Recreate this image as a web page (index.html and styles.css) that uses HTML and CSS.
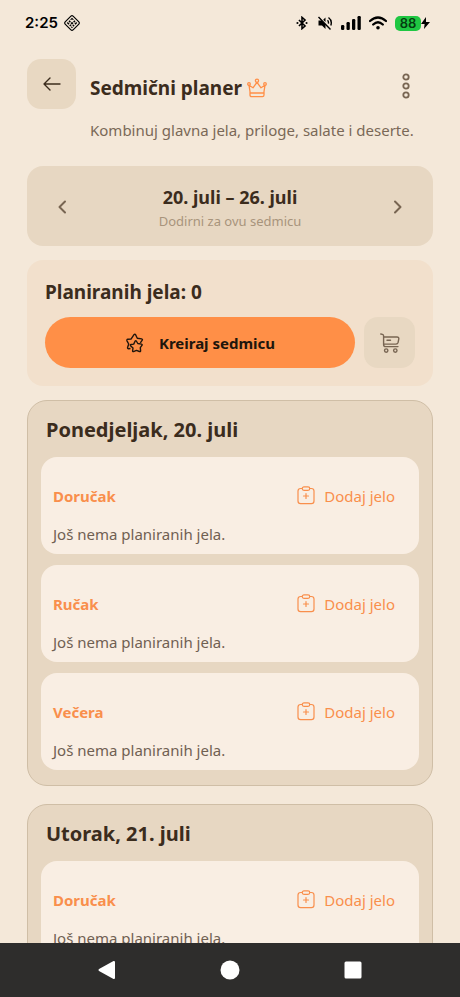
FILE: index.html
```html
<!DOCTYPE html>
<html lang="bs">
<head>
<meta charset="utf-8">
<meta name="viewport" content="width=device-width, initial-scale=1">
<title>Sedmični planer</title>
<link rel="stylesheet" href="styles.css">
</head>
<body>
<svg class="defs" aria-hidden="true">
  <symbol id="clip" viewBox="0 0 20 20">
    <g fill="none" stroke="currentColor" stroke-width="1.2" stroke-linecap="round" stroke-linejoin="round">
      <path d="M6 2.500H4.600Q2 2.500 2 5.100V15Q2 17.600 4.600 17.600H15.400Q18 17.600 18 15V5.100Q18 2.500 15.400 2.500H14"/>
      <rect x="6.200" y=".8" width="7.600" height="3.600" rx="1.800"/>
      <path d="M10 7.500v5M7.500 10h5"/>
    </g>
  </symbol>
</svg>
<div class="status">
  <span class="clock">2:25</span>
  <svg class="tag" viewBox="0 0 18 18" width="18" height="18" aria-hidden="true">
    <g transform="rotate(45 9 9)">
      <rect x="3.400" y="3.400" width="11.200" height="11.200" rx="1.500" fill="none" stroke="#000" stroke-width="1.200"/>
      <path d="M5.300 5.300h2.500v1H6.300v1.500h-1zM8.800 5.300h1.500v2H8.800zM11.200 5.300h1.500v2.500h-1.500zM5.300 8.800h2v1.500h-2zM8.200 8.200h2v2h-2zM11 9h1.700v1.500H11zM5.300 11.200h2.500v1.500H5.300zM8.800 11h1.500v1.700H8.800zM11.200 11.500h1.500v1.200h-1.500z" fill="#000"/>
    </g>
  </svg>
  <div class="signals">
    <svg viewBox="0 0 14 16" width="14" height="14" aria-hidden="true">
      <path d="M3.500 4.500l7 7L7 14.500v-13l3.500 3-7 7" fill="none" stroke="#000" stroke-width="1.800"/>
      <circle cx="1.800" cy="8" r="1.200"/><circle cx="12.200" cy="8" r="1.200"/>
    </svg>
    <svg class="mute" viewBox="0 0 16 16" width="16" height="16" aria-hidden="true">
      <path d="M1.500 5.500h3l4 4.200V14L5 10.500H1.500zM6.200 4.700L8.500 2.500V7z"/>
      <path d="M1.500 2l12 12.500M10.500 5.300q1.300 1.200.9 3.300M11.500 2.500q4 3 2.300 8" fill="none" stroke="#000" stroke-width="1.400"/>
    </svg>
    <svg class="bars" viewBox="0 0 20 14" width="20" height="14" aria-hidden="true">
      <rect x="0" y="9" width="3.300" height="5" rx="1.200"/><rect x="5.500" y="6" width="3.300" height="8" rx="1.200"/><rect x="11" y="3" width="3.300" height="11" rx="1.200"/><rect x="16.500" y="0" width="3.300" height="14" rx="1.200"/>
    </svg>
    <svg viewBox="0 0 18 14" width="18" height="14" aria-hidden="true">
      <path d="M1 5Q9-2 17 5M4.200 8.500Q9 4 13.800 8.500" fill="none" stroke="#000" stroke-width="2.300" stroke-linecap="round"/>
      <circle cx="9" cy="11.800" r="1.800"/>
    </svg>
    <div class="battery"><span class="level">88</span>
      <svg viewBox="0 0 9 12" width="9" height="12" aria-hidden="true"><path d="M5 0L0 7h3.600L3 12 9 5H5z"/></svg>
    </div>
  </div>
</div>
<main class="screen">
  <header class="header">
    <button class="tile back" aria-label="Nazad">
      <svg viewBox="0 0 18 14" width="18" height="14"><path d="M17 7H1M7 1L1 7l6 6" fill="none" stroke="currentColor" stroke-width="1.400" stroke-linecap="round" stroke-linejoin="round"/></svg>
    </button>
    <div class="heading">
      <h1>Sedmični planer
        <svg viewBox="0 0 20 20" width="20" height="20" aria-hidden="true"><g fill="none" stroke="#ff8f47" stroke-width="1.300" stroke-linejoin="round"><path d="M3 13.500L2 7.300l4 2.500L10 4.300l4 5.500 4-2.500-1 6.200V17q0 1.600-1.600 1.600H4.600Q3 18.600 3 17zM3.200 15h13.600"/><circle cx="10" cy="2.700" r="1.600"/><circle cx="2" cy="6" r="1.300"/><circle cx="18" cy="6" r="1.300"/></g></svg>
      </h1>
      <p>Kombinuj glavna jela, priloge, salate i deserte.</p>
    </div>
    <button class="more" aria-label="Više opcija">
      <svg viewBox="0 0 8 26" width="8" height="26"><g fill="none" stroke="currentColor" stroke-width="1.800"><circle cx="4" cy="4" r="2.700"/><circle cx="4" cy="13" r="2.700"/><circle cx="4" cy="22" r="2.700"/></g></svg>
    </button>
  </header>

  <section class="week">
    <button class="arrow" aria-label="Prethodna sedmica"><svg viewBox="0 0 10 14" width="10" height="14"><path d="M8 1.500L2.500 7 8 12.500" fill="none" stroke="currentColor" stroke-width="2" stroke-linecap="round" stroke-linejoin="round"/></svg></button>
    <button class="range"><strong>20. juli – 26. juli</strong><span>Dodirni za ovu sedmicu</span></button>
    <button class="arrow" aria-label="Sljedeća sedmica"><svg viewBox="0 0 10 14" width="10" height="14"><path d="M2 1.500L7.500 7 2 12.500" fill="none" stroke="currentColor" stroke-width="2" stroke-linecap="round" stroke-linejoin="round"/></svg></button>
  </section>

  <section class="plan">
    <h2>Planiranih jela: 0</h2>
    <div class="actions">
      <button class="create">
        <svg viewBox="0 0 20 20" width="20" height="20" aria-hidden="true"><g fill="none" stroke="currentColor" stroke-width="1.400" stroke-linejoin="round"><path d="M5.500 15.500L3.500 15.700q-1.200 0-.9-1.200L3.700 11 2 7.800q-.5-1.300.8-1.500l3.200-.2L9 1.700Q9.900.5 10.600 1.700l1.700 3.500 4.300.7q1.400.4.500 1.500L15.300 9.800"/><path d="M11.300 8l1.500 2.500 3.700.6q1.200.4.400 1.300l-1.600 2.200.3 3.300q-.1 1-1.200.6l-2.900-1.100-3 1.200q-1 .2-.9-.8l.4-2.800-2.500-2.300q-.6-1 .6-1.200l2.600-.4L10.200 8q.6-.8 1.100 0z"/></g></svg>
        <span>Kreiraj sedmicu</span>
      </button>
      <button class="tile cart" aria-label="Lista za kupovinu">
        <svg viewBox="0 0 20 20" width="20" height="20"><g fill="none" stroke="currentColor" stroke-width="1.400" stroke-linecap="round" stroke-linejoin="round"><path d="M.8 1l1.600.4Q3.600 1.800 3.600 3v8.400q0 2.200 2.200 2.200H18M3.600 4H17q2 0 1.800 1.800l-.7 3.600q-.4 1.700-2.100 1.700H3.800M7 7.300h3.500"/><circle cx="6.200" cy="17.600" r="1.700"/><circle cx="15.300" cy="17.600" r="1.700"/></g></svg>
      </button>
    </div>
  </section>

  <section class="day">
    <h2>Ponedjeljak, 20. juli</h2>
    <article class="meal"><div class="row"><h3>Doručak</h3><button class="add"><svg width="20" height="20" aria-hidden="true"><use href="#clip"/></svg>Dodaj jelo</button></div><p>Još nema planiranih jela.</p></article>
    <article class="meal"><div class="row"><h3>Ručak</h3><button class="add"><svg width="20" height="20" aria-hidden="true"><use href="#clip"/></svg>Dodaj jelo</button></div><p>Još nema planiranih jela.</p></article>
    <article class="meal"><div class="row"><h3>Večera</h3><button class="add"><svg width="20" height="20" aria-hidden="true"><use href="#clip"/></svg>Dodaj jelo</button></div><p>Još nema planiranih jela.</p></article>
  </section>

  <section class="day">
    <h2>Utorak, 21. juli</h2>
    <article class="meal"><div class="row"><h3>Doručak</h3><button class="add"><svg width="20" height="20" aria-hidden="true"><use href="#clip"/></svg>Dodaj jelo</button></div><p>Još nema planiranih jela.</p></article>
  </section>
</main>
<nav class="system">
  <button aria-label="Natrag"><svg viewBox="0 0 20 20" width="20" height="20"><path d="M17 2v16L2.500 10z" fill="#fff" stroke="#fff" stroke-width="2" stroke-linejoin="round"/></svg></button>
  <button aria-label="Početna"><svg viewBox="0 0 20 20" width="20" height="20"><circle cx="10" cy="10" r="9.500" fill="#fff"/></svg></button>
  <button aria-label="Nedavno"><svg viewBox="0 0 20 20" width="20" height="20"><rect x="1.500" y="1.500" width="17" height="17" rx="1.500" fill="#fff"/></svg></button>
</nav>
</body>
</html>
```
FILE: styles.css
```css
* { box-sizing: border-box; }
body {
  margin: 0;
  height: 100vh;
  display: flex;
  flex-direction: column;
  background: #f4e8d9;
  color: #3b2c1d;
  font-family: "Noto Sans", "Open Sans", sans-serif;
}
h1, h2, h3, p { margin: 0; }
button {
  border: 0;
  padding: 0;
  background: none;
  color: inherit;
  font: inherit;
}
svg { display: block; flex: none; }
.defs { position: absolute; width: 0; height: 0; }

.status {
  flex: none;
  display: flex;
  align-items: center;
  gap: 5px;
  height: 46px;
  padding: 0 30px 0 25px;
  color: #000;
}
.clock { font: 600 15px/20px Inter, sans-serif; }
.signals {
  display: flex;
  align-items: center;
  gap: 8px;
  margin-left: auto;
}
.battery { display: flex; align-items: center; }
.level {
  width: 26px;
  border-radius: 5px;
  background: #1fc742;
  color: #053c10;
  font: 600 13px/15px Inter, sans-serif;
  text-align: center;
}

.screen {
  flex: 1;
  min-height: 0;
  overflow: hidden;
  padding: 13px 27px 0;
}
.tile {
  flex: none;
  display: grid;
  place-items: center;
  border-radius: 14px;
  background: #e8d8c2;
}
.header {
  display: flex;
  align-items: flex-start;
  gap: 14px;
  height: 92px;
}
.back { width: 49px; height: 50px; }
.heading { flex: 1; width: 0; padding-top: 15px; }
h1 {
  display: flex;
  align-items: center;
  gap: 5px;
  font-size: 19px;
  line-height: 28px;
}
.heading p {
  margin-top: 16px;
  color: #7a6857;
  font-size: 15px;
  line-height: 24px;
  white-space: nowrap;
}
.more { padding: 14px 23px 0 0; color: #786552; }

.week {
  display: flex;
  align-items: center;
  justify-content: space-between;
  margin-top: 15px;
  height: 80px;
  padding: 2px 30px 0;
  border-radius: 16px;
  background: #e7d7c2;
}
.arrow { color: #786552; }
.range { display: grid; gap: 1px; }
.range strong { font-size: 18px; line-height: 26px; }
.range span { color: #a8947c; font-size: 13px; line-height: 20px; }

.plan {
  margin-top: 14px;
  padding: 18px;
  border-radius: 16px;
  background: #f2e0cc;
}
h2 { font-size: 20px; line-height: 28px; }
.plan h2 { font-size: 19px; }
.actions { display: flex; gap: 9px; margin-top: 11px; }
.create {
  flex: 1;
  display: flex;
  align-items: center;
  justify-content: center;
  gap: 14px;
  height: 51px;
  border-radius: 26px;
  background: #ff8f47;
  color: #20150c;
  font-size: 15px;
  font-weight: 700;
}
.cart { width: 51px; height: 51px; color: #786552; }

.day {
  margin-top: 14px;
  padding: 15px 13px;
  border: 1px solid #cfbea6;
  border-radius: 20px;
  background: #e7d7c2;
}
.day + .day { margin-top: 18px; }
.day h2 { padding-left: 5px; margin-bottom: 13px; }
.meal {
  height: 97px;
  padding: 24px 24px 0 12px;
  border-radius: 16px;
  background: #f9eee3;
}
.meal + .meal { margin-top: 11px; }
.row { display: flex; justify-content: space-between; align-items: center; }
h3 { color: #f98f4c; font-size: 15px; line-height: 30px; }
.add {
  display: flex;
  align-items: center;
  gap: 8px;
  color: #f98f4c;
  font-size: 15px;
  line-height: 30px;
}
.meal p { margin-top: 12px; color: #706052; font-size: 15px; line-height: 22px; }

.system {
  flex: none;
  display: flex;
  justify-content: space-around;
  align-items: center;
  height: 54px;
  padding: 0 46px;
  background: #2e2d2c;
}
```
